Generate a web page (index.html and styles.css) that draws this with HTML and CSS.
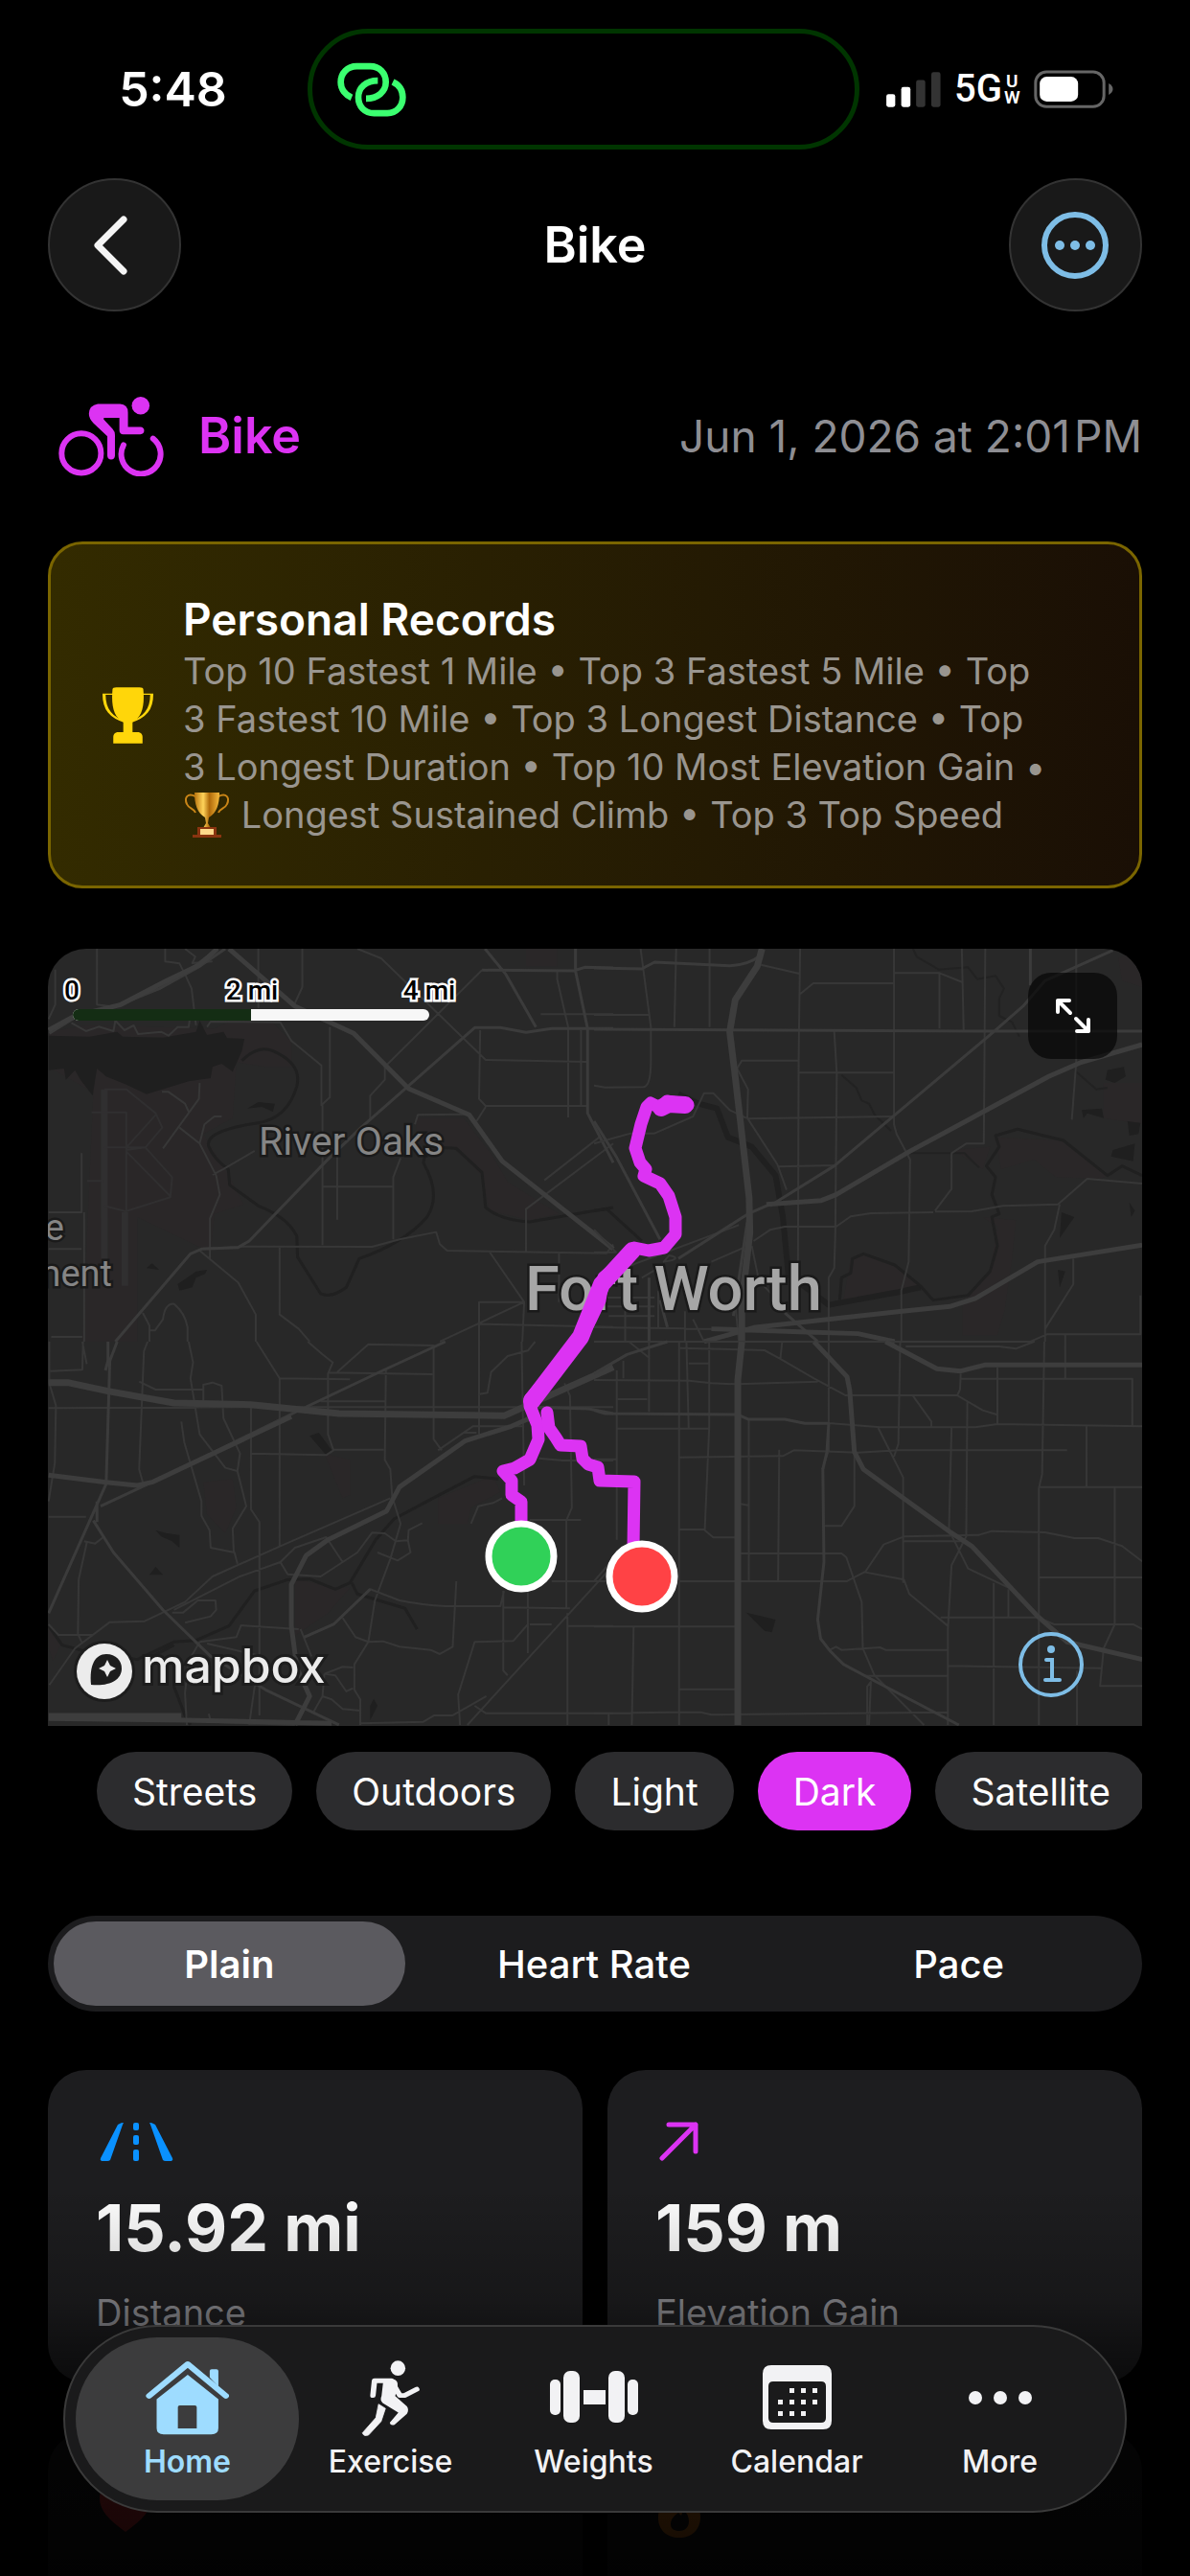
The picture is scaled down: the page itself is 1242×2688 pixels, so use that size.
FILE: index.html
```html
<!DOCTYPE html>
<html lang="en">
<head>
<meta charset="utf-8">
<meta name="viewport" content="width=device-width, initial-scale=1">
<title>Bike</title>
<link rel="stylesheet" href="styles.css">
</head>
<body>
<div class="app">
  <div class="status">
    <div class="status-time">5:48</div>
    <div class="island">
      <svg class="link-icon" viewBox="126 134 216 170" fill="none" stroke="#3bff70" stroke-width="20" aria-hidden="true">
        <path d="M171 244C152 236 137 219 137 196C137 167 158 146 187 146H229C258 146 278 167 278 196C278 226 252 247 216 247"/>
        <path d="M253 191C216 191 192 212 192 243C192 272 212 293 241 293H283C311 293 331 271 331 243C331 220 319 204 300 195"/>
      </svg>
    </div>
    <div class="status-right">
      <svg class="signal" viewBox="75 70 172 112" aria-hidden="true">
        <rect x="75" y="140" width="28" height="41" rx="7" fill="#fff"/><rect x="122" y="118" width="29" height="63" rx="7" fill="#fff"/>
        <rect x="169" y="96" width="29" height="85" rx="7" fill="#333"/><rect x="217" y="71" width="29" height="110" rx="7" fill="#333"/>
      </svg>
      <div class="network"><span>5G</span><span class="network-uw"><span>U</span><span>W</span></span></div>
      <svg class="battery" viewBox="534 66 248 120" aria-hidden="true">
        <rect x="539" y="72" width="214" height="109" rx="34" fill="none" stroke="#666" stroke-width="9"/>
        <rect x="552" y="87" width="120" height="78" rx="22" fill="#fff"/><path d="M768 108Q781 116 781 126T768 144Z" fill="#666"/>
      </svg>
    </div>
  </div>

  <header class="nav">
    <button class="round" type="button" aria-label="Back">
      <svg width="36" height="62" viewBox="0 0 36 62" fill="none" stroke="#f5f5f5" stroke-width="7" stroke-linecap="round" stroke-linejoin="round"><path d="M32 4L5 31L32 58"/></svg>
    </button>
    <h1>Bike</h1>
    <button class="round" type="button" aria-label="More options">
      <svg width="70" height="70" viewBox="0 0 70 70" fill="#7ebde6"><circle cx="35" cy="35" r="32" fill="none" stroke="#7ebde6" stroke-width="6"/><circle cx="19" cy="35" r="5"/><circle cx="35" cy="35" r="5"/><circle cx="51" cy="35" r="5"/></svg>
    </button>
  </header>

  <main>
    <div class="activity">
      <svg class="bike-icon" viewBox="62 68 332 252" fill="none" stroke="#dc33f3" stroke-linecap="round" stroke-linejoin="round" aria-hidden="true">
        <circle cx="134" cy="248" r="62" stroke-width="18"/>
        <path d="M267 222A62 62 0 1 0 360 202" stroke-width="18"/>
        <circle cx="321" cy="98" r="28" fill="#dc33f3" stroke="none"/>
        <path d="M186 93H256Q281 94 281 120V165H320Q332 166 332 177T320 189H266Q254 188 254 176V137H207Q202 137 205 142L233 172Q240 180 240 190V256Q239 268 228 268T216 256V195L172 153Q158 139 158 124Q159 97 186 93Z" fill="#dc33f3" stroke="none"/>
      </svg>
      <h2>Bike</h2>
      <time datetime="2026-06-01T14:01">Jun 1, 2026 at 2:01&#8202;PM</time>
    </div>

    <section class="records">
      <svg class="cup" viewBox="135 530 66 176" preserveAspectRatio="none" aria-hidden="true">
        <path d="M149 552H137C137 600 146 625 166 640M187 552H199C199 600 190 625 170 640" fill="none" stroke="#ffd60a" stroke-width="4"/>
        <path d="M148 537Q148 531 153 531H183Q188 531 188 537C190 590 186 625 174 638V670H182Q187 674 187 684V705H149V684Q149 674 154 670H162V638C150 625 146 590 148 537Z" fill="#ffd60a"/>
      </svg>
      <div>
        <h3>Personal Records</h3>
        <p>Top 10 Fastest 1 Mile • Top 3 Fastest 5 Mile • Top<br>3 Fastest 10 Mile • Top 3 Longest Distance • Top<br>3 Longest Duration • Top 10 Most Elevation Gain •<br><svg class="award" viewBox="0 0 50 48" role="img" aria-label="Trophy">
          <defs><linearGradient id="gold"><stop offset="0" stop-color="#b8730c"/><stop offset=".35" stop-color="#ffd35a"/><stop offset=".6" stop-color="#b06a0a"/><stop offset="1" stop-color="#f5b93c"/></linearGradient></defs>
          <path d="M13 5C5 1 1 6 4 13C6 18 12 18 13 22M37 5C45 1 49 6 46 13C44 18 38 18 37 22" fill="none" stroke="#c98517" stroke-width="2"/>
          <path d="M12 1H38C38 14 35 22 27 27L26 33L29 38H21L24 33L23 27C15 22 12 14 12 1Z" fill="url(#gold)"/>
          <path d="M15 37H35V45H40V48H10V45H15Z" fill="#8a3410"/><rect x="18" y="39" width="14" height="6" fill="#ffd98a"/>
        </svg> Longest Sustained Climb • Top 3 Top Speed</p>
      </div>
    </section>

    <section class="map" aria-label="Route map">
      <svg class="map-canvas" viewBox="0 0 1142 811">
        <rect width="1142" height="811" fill="#282828"/>
        <g transform="translate(-10 -10) scale(.3827 .3333)">
          <path class="park" d="M28 290L130 270L480 280L540 250L640 262L690 320L690 400L620 400L540 385L530 560L450 610L520 740L560 830L480 860L470 980L270 870L270 1260H120L150 480L28 400ZM1030 560H1160L1240 680L1280 760L1420 860L1340 880L1230 850L1210 740L1130 650L1030 640ZM1330 30H1415V85H1330Z"/>
          <path class="water" d="M28 302L140 305L215 290L230 305L340 308L430 290L440 255L460 300L505 290L515 310L562 312L555 350L530 415L500 390L475 400L470 435L410 445L295 485L240 455L185 430L160 405L148 490L115 440L100 410L75 440L70 405L28 410ZM570 530L600 510L645 515L640 540L610 525ZM295 1030L310 1015L330 1035ZM380 1080L430 1040L460 1035L455 1048L430 1060L420 1090L385 1100Z"/>
          <path class="stream" d="M555 380Q600 330 640 350Q720 390 705 460Q680 560 600 575Q450 600 465 650Q480 690 518 720L522 770L600 835Q680 870 705 930L707 995L770 1110Q800 1125 840 1090L875 1000Q1000 950 1060 870Q1100 800 1050 700L1060 650L1140 655L1210 730L1220 840Q1260 880 1340 885L1568 840"/>
          <path class="faint faint-wide" d="M180 470V1010M236 855V1085"/>
          <path class="faint" d="M145 542H240V850M180 470H240L320 545L338 590L292 652H180M240 660L292 652L365 745L360 808L238 852L180 835M240 665L360 805M322 548L240 652M133 757H180"/>
          <path class="minor" d="M160 30V205L210 212M46 95V205L28 250M346 30V70L385 76L400 110L418 155L430 270M720 30V150L700 200M600 30V215M90 262L130 288L165 274L205 288L210 255L235 285L260 270L272 297L335 290L355 302L380 275H410L415 235M460 275L470 258L660 260L690 318L772 395V520L795 495V275M775 520V958M815 675V878M775 775H968M968 940V745L988 685M905 565V490L945 440V400L1210 97M870 30L935 60L1220 378L1495 384M1415 97V125L1445 275V558M1205 285L1202 500L1220 522H1495M1480 285V520M1370 235H1568M1220 525L1195 570M1165 548L1035 550L1027 580M440 450L438 500L340 655M337 478H355L400 515L410 540M385 590L440 640L485 740L495 800L468 875V1000M440 640L453 580L480 555H500M475 738L505 720L590 663M118 670V855H28M125 855V1260M118 970H28M35 1245H120M658 962V1175L710 1220L740 1260M440 975L545 1075L593 1175V1260M285 1170L303 1210V1260M305 1225H318L340 1190Q345 1140 370 1142Q400 1170 407 1215V1260M450 968L570 962L910 963L985 940L1085 917L1095 955L1115 975L1550 983L1568 955M1230 978L1325 1136L1320 1260M1330 978V845L1568 640M1380 755L1530 620M1420 983V1136M1325 1136H1202V1260M1202 1205L1568 1214M1095 1260L1325 1136M400 30L428 55L420 75L475 70"/>
          <path class="major" d="M210 1260L415 985L445 970L545 965L575 945L785 695L880 590L1190 277H1260L1330 292L1400 280H1568M1465 30V100L1498 280V545L1568 700M1210 97L1460 99L1490 88L1568 90M1218 30L1275 110L1357 275M30 295L100 245L210 210L300 160L420 90L490 30M200 215L330 155L440 85L510 30"/>
          <path class="road" d="M520 30L700 210L860 295L1010 468L1175 550L1265 695L1568 970"/>
          <path class="road" d="M28 285L100 240L225 205L350 130L440 80L488 30"/>
        </g>
        <g transform="translate(570 -10) scale(.3827 .3333)">
          <path class="park" d="M1390 450H1500V580L1390 560ZM1095 620L1280 630L1400 740L1380 750L1260 745L1200 690L1110 720ZM1060 870L1150 880L1140 1000L1120 1160L1100 1240H1005V1140L1080 1040L1100 900ZM700 1000L730 985L820 1020L890 1090L830 1115L680 1130ZM1430 60L1495 30V150L1440 130ZM980 660L1080 650L1060 720Z"/>
          <path class="water" d="M1400 410L1445 400L1450 430L1420 450L1395 440ZM1330 535L1385 530L1390 560L1345 545L1335 560ZM1455 570L1490 575L1485 610L1460 615ZM1415 660L1475 640L1470 695L1410 680ZM1275 855L1310 870L1270 935ZM1460 825L1475 850L1465 870ZM1265 1035L1285 1040L1270 1090Z"/>
          <path class="stream river" d="M230 485L285 515L335 530L365 620L430 650L495 740L515 870L530 1050L640 1145L830 1105L890 1090"/>
          <path class="stream" d="M0 850L35 845L130 945M670 1130L675 1060L700 1045L705 1000L735 985L820 1020L890 1085L925 1130L1020 1115L1080 1040L1100 960L1085 870L1105 860L1085 800L1095 745L1070 710L1105 650L1095 615L1155 595L1280 630L1400 740L1440 710L1495 740"/>
          <path class="creek" d="M870 30L880 55L940 95L1020 88L1045 125L1095 115L1118 155L1105 185V240L1140 260L1160 305M675 425L715 465L730 505L750 515L765 550L810 600M860 670L930 670L1010 670L1050 715M1310 410L1370 470L1400 465"/>
          <path class="minor" d="M127 30L155 275V380Q155 460 135 463L30 464L0 458M224 30L219 275M315 30V275M0 237H150M562 30L558 380L556 1080M818 30V580L825 610L862 690L858 1010L838 1100V1260M562 172L598 138H818M820 106H942V280M942 106L1005 135M1003 30L1008 285M1067 30L1063 640H1015L975 670V782L930 850M1315 30V385L1303 565M455 80L560 108M560 380H403L390 405L420 470L418 560L500 705L525 785M558 418H818M655 288L662 420L658 920L655 1030L640 1060V1260M420 562L815 555M503 712L658 708M0 640L100 608H165L270 555L300 482H325L370 535L415 560M930 853L1030 852L1115 835L1265 830L1345 750L1495 765M1270 830L1255 910L1230 960V1260M435 945L480 910L520 900L660 900L700 868L755 858L925 855M1307 1000V1080L1230 1220M1190 1260L1235 1237H1490V1115M1285 1240V1260M0 910L60 980H0M0 1122H165M0 1150H165M40 1180H165M85 1100V1260M175 1100V1215M0 1215L350 1220M248 1165V1260M10 1060L395 895M130 1060L190 1020M320 1010L410 965M205 990Q245 1000 190 1010ZM380 1080L395 1260M430 960L450 1070L500 1130M270 1190L300 1260"/>
          <path class="major" d="M0 90L130 93L165 72L370 83Q420 82 455 50M0 282L1060 288H1495M1190 30V145M480 835L655 710L1090 290L1170 210L1230 130L1415 35M0 570L60 680L180 940M150 1060V1260M180 1130L200 1215M230 1000L420 860L480 830M520 1170L610 1260M420 870L380 1180"/>
          <path class="road" d="M470 830L620 818L660 800L860 665L1240 430L1330 385L1495 330M300 1260L440 1215L840 1165L970 1150L1040 1125L1210 1010L1495 958M320 1220L580 1230L720 1235L820 1260"/>
          <path class="highway" d="M458 30L445 85L385 190L370 290L385 430L423 810L425 920L403 1140V1260"/>
        </g>
        <g transform="translate(-10 410) scale(.3827 .3333)">
          <path class="park" d="M450 440L530 430L540 520L510 600L460 540ZM1090 490L1240 420L1260 470L1180 520L1170 570L1090 570ZM700 740L800 770L850 770L790 850L700 920ZM780 350L850 370V480L830 490ZM28 890L60 950L40 1000L28 960Z"/>
          <path class="water" d="M320 590L350 600L385 605V645L365 625L335 610ZM303 730L320 705L340 730ZM740 295L765 285L800 340L785 355ZM905 1140L915 1118L925 1140L905 1185Z"/>
          <path class="stream" d="M28 890L65 950L130 970L270 995L370 940L430 935L520 890L590 780L680 745L740 743L810 775L850 755L920 620L970 555L1060 500L1190 422L1255 430M855 755L870 790L1000 835L1033 900M370 1000V1080L400 1170L415 1200M370 950L310 985"/>
          <path class="minor" d="M30 0V130L48 200L45 380L28 500M120 0L132 70M33 92L120 88L122 0M28 208L580 205L580 525L603 565V1170M298 0L288 30L275 400L285 440M410 0L422 65L415 115L440 290L510 395L543 405L550 350L505 240L500 138L475 128L450 135V185M275 125L320 150H450M390 250L398 315L445 500V545L467 590L470 645L535 660L543 695M543 405L567 515L530 585L533 660M658 115V640M595 0L658 115L850 118M735 0L775 40L803 65L790 100V290L805 340L785 355L580 350M815 95L900 8L1080 12M790 97L1075 102M1078 10V305L1100 340M770 187H945M948 85L945 370L960 400L965 485L988 570L960 680L918 810L900 940L862 1010V1090L878 1120V1200M805 338H942M1202 0V290M1200 165L1225 160L1235 95L1280 45L1335 28L1355 0M1318 0L1325 450M28 548H130M125 625L155 632L180 610M133 625L110 745L108 915L118 940M28 885L55 918H150M30 1075L100 960L195 878L290 875L400 815L475 735L660 640L960 490M440 940L540 925L553 888L710 900M400 880L470 860L485 840L483 810H435L395 848H365M370 840L550 735L660 690L700 645L785 612L830 690L770 735L680 728L660 690M725 925L805 885L905 775L985 810Q1050 825 1110 828H1260L1270 780M830 865L865 925L900 940L940 938L985 955L1070 965L1095 978L1130 955L1140 750M830 690L870 660L910 598L945 600L975 625L1008 622L1010 590L1047 568M1008 622L1015 660L980 685L925 660M1180 570L1200 515L1240 505L1265 490M880 1195L1050 1190L1080 1170H1130L1222 1110M1150 1200L1145 1105L1190 940L1295 937L1335 885V830M1268 780V1030L1280 1045M1170 1200L1568 700M1270 832L1450 835M1335 975V780M1340 885H1400M1445 890H1568M1443 850V1200M1190 1140L1220 1163H1568M1340 558H1480M1400 750H1568M1440 835V560L1455 520L1450 170L1435 130M1365 365L1430 372H1568M430 205H1568M460 945L610 985L620 1000M465 1165L470 1190L700 1200M575 1200L590 1080L600 1070M440 940L410 1000L400 1100L405 1200M715 900L745 985M780 1040L830 1018L858 1020M780 1040L810 1045L840 1095L858 1085M775 1110L800 1120L830 1150L878 1155M750 1160L775 1110L780 1040M1160 285H1195M1090 340L1185 265H1325"/>
          <path class="major" d="M28 850L185 445L195 60L215 0M190 0V60L183 90M150 560L205 660L340 840L470 985L620 1090L820 1200M160 500L160 565M170 515L300 445L480 345L720 210L940 90L1110 0M725 925L805 885L905 775M1340 205L1500 210L1568 225"/>
          <path class="road" d="M28 418L185 440L270 450L310 440L690 235M700 1200L740 1110L705 1020L690 890L690 760L730 670L790 620L950 530L985 455L1165 310L1290 265L1340 240M28 1180L400 1185L800 1195M28 1170H390"/>
          <path class="highway" d="M28 128H80L190 155L370 192L580 197L820 225L1270 232L1568 80"/>
        </g>
        <g transform="translate(570 410) scale(.3827 .3333)">
          <path class="water" d="M415 848L495 870L485 910L465 905Z"/>
          <path class="minor" d="M0 0H1200L1150 22L1105 15H850M0 120L260 122L320 130L390 133L610 125M65 180H145M62 90V620M62 272H312M80 60V115M232 0V1200M252 0L258 270M314 0V270L302 590L325 613H385M258 68H312M235 20L465 27L510 55L600 115L685 168H990L1060 215L1098 228M513 0L508 55M640 0V340L622 400M422 245V750M505 338L502 750M232 362L515 358L545 340L720 347L830 340H1290M400 508L420 512M232 588H300M710 340V515L675 577H630M400 663H675L688 675L730 815L733 960L765 1045L900 1200M232 750H690L740 720L790 635L845 610L1050 605L1085 593L1230 597L1310 615H1375L1440 640L1495 688M740 722L845 745L860 790L965 890M845 625L1010 625M843 755V425L775 270M835 0L830 320L818 360M870 170L920 250V268M640 255L780 268H1040L1100 258L1495 265M975 270L968 590L1020 710L1130 770M1018 190L1015 610L975 700L965 900V1200M1000 100L998 150L990 170M1000 116H1468V262M1100 80V260M1228 0L1222 415L1213 460V1200M1285 0V115M1213 455H1495M1343 262V455M1420 455V885L1390 960L1380 1078H1495M1213 738H1495M945 863H1210L1255 885H1470L1495 900M1090 755V1200M1130 775V860M0 892H385M108 892L103 1200M232 1088H385M0 1163L210 1160L290 1160L320 1168L965 1160M40 1165V1200M643 965L660 955L675 965L780 957L795 965H965M740 1046H965M745 1200V1080L755 1065L750 1200M965 1015L1385 1022M1317 1030V1200M0 750L60 670M60 368H0M150 0V220M95 0L150 50"/>
          <path class="major" d="M0 215L30 225L390 228L420 243H520L575 256H640L635 345L624 400L627 690L610 870L618 930L645 970L680 1010L770 1065L995 1200M0 100L90 40L200 0"/>
          <path class="road" d="M795 0L935 85L1000 92L1065 73H1495M600 0L690 110L697 150L710 345L735 400L970 595L1030 640L1210 860L1290 940L1495 995"/>
          <path class="highway" d="M403 0L392 120V1200"/>
        </g>
        <g class="place">
          <text x="220" y="215" font-size="41">River Oaks</text>
          <text x="17" y="304" font-size="38" text-anchor="end">e</text>
          <text x="67" y="352" font-size="38" text-anchor="end">ment</text>
          <text class="city" x="498" y="377" font-size="65">Fort Worth</text>
        </g>
        <g fill="none" stroke="#dc33f3" stroke-width="13" stroke-linecap="round" stroke-linejoin="round">
          <path d="M668 163L646 159L639 166L629 161L625 165L619 183L613 208L618 223L624 230L622 237L639 245L648 258L655 280V298L643 312L627 315L612 312L593 332L580 343L576 367L566 388L554 410L537 430L524 445L503 470V477L511 497L512 512L503 533L487 542L475 545L484 555V570L494 577V605"/>
          <path d="M665 163L648 162L640 166M610 315L578 350L556 405L505 472" stroke-width="18"/>
          <path d="M521 484L523 500L530 510L535 518L556 519L558 532L564 538L574 541L576 555L612 556L611 625"/>
        </g>
        <g stroke="#fff" stroke-width="7"><circle cx="494" cy="634" r="34" fill="#30d158"/><circle cx="620" cy="655" r="34" fill="#ff4245"/></g>
        <g class="scale">
          <rect x="26" y="63" width="372" height="12" rx="6" fill="#f7f7f7"/>
          <path d="M212 63H32A6 6 0 0 0 32 75H212Z" fill="#142d14"/>
          <text x="25" y="53">0</text><text x="213" y="53">2 mi</text><text x="398" y="53">4 mi</text>
        </g>
        <g fill="#ececec" stroke="#1d1d1d" stroke-width="6" paint-order="stroke">
          <circle cx="59" cy="754" r="29"/>
          <path d="M45 768C43 748 49 736 61 736C71 736 77 743 77 751C77 763 64 770 45 768Z" fill="#1d1d1d" stroke="none"/>
          <path d="M62 742L65 748L71 751L65 754L62 760L59 754L53 751L59 748Z" stroke="none"/>
          <text class="brand" x="98" y="766">mapbox</text>
        </g>
      </svg>
      <button class="expand" type="button" aria-label="Expand map">
        <svg width="40" height="40" viewBox="0 0 40 40" fill="none" stroke="#fff" stroke-width="4" stroke-linecap="round" stroke-linejoin="round"><path d="M17 17L4 4M4 16V4H16M23 23L36 36M36 24V36H24"/></svg>
      </button>
      <button class="info" type="button" aria-label="Map information">
        <svg width="70" height="70" viewBox="0 0 70 70" fill="none" stroke="#7ebde6" stroke-width="4" stroke-linecap="round"><circle cx="35" cy="35" r="32"/><path d="M30 30H36V51M29 51H44"/><circle cx="35" cy="19" r="4" fill="#7ebde6" stroke="none"/></svg>
      </button>
    </section>

    <div class="chips">
      <button type="button">Streets</button>
      <button type="button">Outdoors</button>
      <button type="button">Light</button>
      <button type="button" class="on">Dark</button>
      <button type="button">Satellite</button>
    </div>

    <div class="segments">
      <button type="button" class="on">Plain</button>
      <button type="button">Heart Rate</button>
      <button type="button">Pace</button>
    </div>

    <section class="stats">
      <article>
        <svg width="85" height="42" viewBox="0 0 85 42" fill="#0a91ff" aria-hidden="true"><path d="M25 2Q26 1 29 1L28 3L15 40Q14 41 12 41H6Q4 40 5 38L23 3ZM60 2Q59 1 56 1L57 3L70 40Q71 41 73 41H79Q81 40 80 38L62 3Z"/><rect x="39" y="1" width="6" height="8" rx="2"/><rect x="39" y="14" width="6" height="10" rx="2"/><rect x="39" y="29" width="6" height="12" rx="2"/></svg>
        <strong>15.92 mi</strong>
        <span>Distance</span>
      </article>
      <article>
        <svg width="50" height="42" viewBox="0 0 50 42" fill="none" stroke="#dc33f3" stroke-width="5" stroke-linecap="round" stroke-linejoin="round" aria-hidden="true"><path d="M7 38L42 3M14 3H42V31"/></svg>
        <strong>159 m</strong>
        <span>Elevation Gain</span>
      </article>
      <article>
        <svg width="60" height="50" viewBox="0 0 60 50" fill="#ff3b40" aria-hidden="true"><path d="M31 50C13 37 4 27 4 15C4 6 10 0 18 0Q27 0 31 8Q35 0 44 0C52 0 58 6 58 15C58 27 49 37 31 50Z"/></svg>
      </article>
      <article>
        <svg width="52" height="56" viewBox="0 0 52 56" fill="#ff8a1f" aria-hidden="true"><path fill-rule="evenodd" d="M22 0C40 8 47 20 47 34C47 48 38 56 25 56C12 56 3 48 3 35C3 27 6 20 11 16L15 22C21 16 24 9 22 0ZM24 30C18 34 16 38 16 42C16 47 20 49 25 49C31 49 35 45 35 39C35 34 33 30 29 27L27 33Z"/></svg>
      </article>
    </section>
  </main>

  <div class="fade"></div>
  <nav class="tabs" aria-label="Main">
    <a href="#home" class="on" aria-current="page">
      <svg width="87" height="80" viewBox="370 935 212 225" preserveAspectRatio="none" fill="#9edcff" aria-hidden="true">
        <path d="M379 1039L477 946L574 1039" fill="none" stroke="#9edcff" stroke-width="16" stroke-linecap="round" stroke-linejoin="round"/>
        <path d="M533 985V966Q533 961 538 961H550Q555 961 555 966V1012Z"/>
        <path fill-rule="evenodd" d="M477 977L555 1049V1134Q555 1152 537 1152H416Q398 1152 398 1134V1049ZM457 1067Q452 1067 452 1072V1135H500V1072Q500 1067 495 1067Z"/>
      </svg>
      <span>Home</span>
    </a>
    <a href="#exercise">
      <svg width="62" height="80" viewBox="923 935 152 225" preserveAspectRatio="none" fill="none" stroke="#f2f2f4" stroke-linecap="round" stroke-linejoin="round" aria-hidden="true">
        <ellipse cx="1017" cy="958" rx="19" ry="22" fill="#f2f2f4" stroke="none"/>
        <path d="M953 1038L957 995H1000L1022 1038H1034L1065 1020" stroke-width="14"/>
        <path d="M980 990H1005Q1018 994 1016 1010L1010 1040L1040 1070Q1046 1080 1040 1092L1008 1124Q998 1128 996 1118L1018 1088L978 1060Q970 1052 975 1040Z" fill="#f2f2f4" stroke="none"/>
        <path d="M968 1064L985 1076L974 1114L942 1154Q930 1160 926 1148L960 1104Z" fill="#f2f2f4" stroke-width="2"/>
      </svg>
      <span>Exercise</span>
    </a>
    <a href="#weights">
      <svg width="92" height="80" viewBox="573 2463 92 80" fill="#f2f2f4" aria-hidden="true"><rect x="573" y="2483" width="11" height="37" rx="5"/><rect x="587" y="2474" width="17" height="54" rx="7"/><rect x="608" y="2494" width="23" height="15"/><rect x="634" y="2474" width="17" height="54" rx="7"/><rect x="654" y="2483" width="11" height="37" rx="5"/></svg>
      <span>Weights</span>
    </a>
    <a href="#calendar">
      <svg width="74" height="80" viewBox="0 0 74 80" fill="#f2f2f4" aria-hidden="true">
        <path fill-rule="evenodd" d="M10 5H64Q73 5 73 14V63Q73 72 64 72H10Q1 72 1 63V14Q1 5 10 5ZM12 22Q7 22 7 27V60Q7 65 12 65H62Q67 65 67 60V27Q67 22 62 22Z"/>
        <path d="M29 29h5v5h-5zM41 29h5v5h-5zM53 29h5v5h-5zM17 41h5v5h-5zM29 41h5v5h-5zM41 41h5v5h-5zM53 41h5v5h-5zM17 53h5v5h-5zM29 53h5v5h-5zM41 53h5v5h-5z"/>
      </svg>
      <span>Calendar</span>
    </a>
    <a href="#more">
      <svg width="68" height="80" viewBox="0 0 68 80" fill="#f2f2f4" aria-hidden="true"><circle cx="8" cy="39" r="7"/><circle cx="34" cy="39" r="7"/><circle cx="60" cy="39" r="7"/></svg>
      <span>More</span>
    </a>
  </nav>
</div>
</body>
</html>
```
FILE: styles.css
```css
* { box-sizing: border-box; }
body { margin: 0; background: #000; color: #fff; font-family: Inter, "Liberation Sans", sans-serif; }
h1, h2, h3, p { margin: 0; font-weight: 600; }
button { border: 0; padding: 0; color: inherit; font-family: inherit; cursor: pointer; }
svg { display: block; flex: none; }
.app { position: relative; height: 100vh; overflow: hidden; }

.status { display: grid; grid-template-columns: 1fr 576px 1fr; align-items: center; padding: 30px 24px 0 0; }
.status-time { padding-left: 40px; text-align: center; font-size: 50px; line-height: 60px; font-weight: 600; }
.island { display: flex; align-items: center; height: 126px; padding-left: 26px; border: 5px solid #003500; border-radius: 63px; }
.link-icon { width: 72px; height: 57px; }
.status-right { display: flex; align-items: center; gap: 14px; padding-left: 28px; }
.signal { width: 57px; height: 37px; }
.network { display: flex; align-items: center; gap: 2px; font: 500 40px/40px Roboto, sans-serif; }
.network-uw { display: flex; flex-direction: column; align-items: center; font-size: 19px; line-height: 17px; font-weight: 600; }
.battery { width: 83px; height: 40px; }

.nav { display: flex; align-items: center; justify-content: space-between; padding: 30px 50px 0; }
.nav h1 { font-size: 52px; line-height: 60px; }
.round { display: flex; align-items: center; justify-content: center; width: 139px; height: 139px; border: 2px solid #333; border-radius: 50%; background: #191919; }
.round:first-child { padding-right: 10px; }

main { padding: 86px 50px 0; }
.activity { display: flex; align-items: center; height: 88px; padding-left: 11px; }
.bike-icon { width: 110px; height: 84px; }
.activity h2 { margin-left: 36px; color: #dc33f3; font-size: 52px; line-height: 60px; }
.activity time { margin-left: auto; color: #8e8e93; font-size: 46px; line-height: 60px; }

.records { display: flex; align-items: center; gap: 31px; height: 362px; margin-top: 66px; padding: 0 54px; border: 3px solid #7a6500; border-radius: 36px; background: linear-gradient(90deg, #332b00, #1a0f05); white-space: nowrap; }
.cup { width: 53px; height: 59px; }
.records h3 { font-size: 46px; line-height: 58px; }
.records p { color: #99958f; font-size: 38px; line-height: 50px; font-weight: 400; }
.award { display: inline-block; width: 50px; height: 48px; vertical-align: -10px; }

.map { position: relative; margin-top: 63px; overflow: hidden; border-radius: 40px 40px 0 0; }
.map-canvas { width: 100%; height: auto; }
.map-canvas g path { vector-effect: non-scaling-stroke; stroke-linejoin: round; }
.park { fill: #2a2728; }
.water { fill: #1f1f1f; }
.stream, .creek, .faint, .minor, .major, .road, .highway { fill: none; }
.stream { stroke: #202020; stroke-width: 3px; }
.river { stroke-width: 6px; }
.creek { stroke: #222; stroke-width: 2px; }
.faint { stroke: #302f30; stroke-width: 2px; }
.faint-wide { stroke-width: 7px; }
.minor { stroke: #373737; stroke-width: 2px; }
.major { stroke: #3b3b3b; stroke-width: 3px; }
.road { stroke: #3d3d3d; stroke-width: 5px; }
.highway { stroke: #3d3d3d; stroke-width: 7px; }
.place { fill: #858585; stroke: #1a1a1a; stroke-width: 5px; paint-order: stroke; font-family: Roboto, sans-serif; }
.city { fill: #a6a6a6; font-weight: 500; }
.scale text { fill: #000; stroke: #fff; stroke-width: 5px; paint-order: stroke; font: 500 28px Roboto, sans-serif; text-anchor: middle; }
.brand { font: 500 50px Inter, sans-serif; }
.expand, .info { position: absolute; display: flex; align-items: center; justify-content: center; }
.expand { top: 25px; right: 26px; width: 93px; height: 90px; border-radius: 24px; background: rgba(0, 0, 0, .62); }
.info { right: 60px; bottom: 29px; background: none; }

.chips { display: flex; gap: 25px; padding: 27px 0 0 51px; overflow: hidden; }
.chips button { flex: none; height: 82px; padding: 0 37px; border-radius: 41px; background: #2c2c2e; font-size: 39px; }
.chips .on { background: #dc33f3; }

.segments { display: grid; grid-template-columns: repeat(3, 1fr); margin-top: 89px; border-radius: 50px; background: #1c1c1e; }
.segments button { height: 88px; margin: 6px 8px 6px 6px; border-radius: 44px; background: none; font-size: 40px; font-weight: 500; }
.segments .on { background: #5b5a5f; font-weight: 600; }

.stats { display: grid; grid-template-columns: 1fr 1fr; gap: 52px 26px; margin-top: 61px; }
.stats article { display: flex; flex-direction: column; align-items: flex-start; height: 326px; padding: 54px 50px 0; border-radius: 40px; background: #1d1d1f; }
.stats strong { margin-top: 28px; font-size: 68px; line-height: 80px; font-weight: 700; }
.stats span { margin-top: 24px; color: #8e8e93; font-size: 38px; line-height: 50px; }

.fade { position: absolute; left: 0; right: 0; bottom: 0; height: 438px; pointer-events: none; background: linear-gradient(rgba(0, 0, 0, 0) 7%, rgba(0, 0, 0, .2) 34%, rgba(0, 0, 0, .4) 43%, rgba(0, 0, 0, .6) 53%, rgba(0, 0, 0, .86) 66%, rgba(0, 0, 0, .92)); }
.tabs { position: absolute; left: 66px; right: 66px; bottom: 66px; display: flex; height: 196px; padding: 11px 14px 11px 11px; border: 2px solid #3a3a3a; border-radius: 98px; background: #1a1a1b; }
.tabs a { display: flex; flex: 1 1 0; min-width: 0; flex-direction: column; align-items: center; gap: 6px; padding-top: 24px; border-radius: 85px; color: #f2f2f4; text-decoration: none; font-size: 32px; line-height: 40px; font-weight: 500; }
.tabs a + a { margin-left: -21px; }
.tabs .on { background: #3c3c3d; color: #9edcff; font-weight: 600; }
```
